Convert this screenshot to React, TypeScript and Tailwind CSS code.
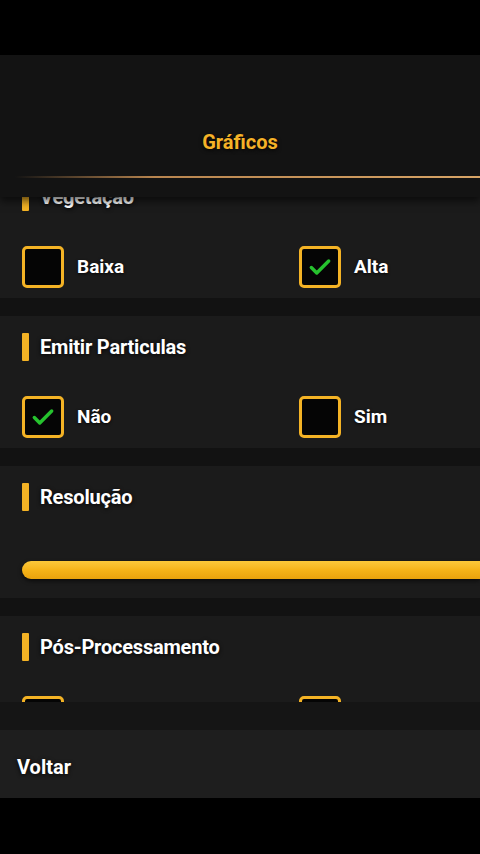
import React from "react";

const font = { fontFamily: "Roboto, 'Liberation Sans', sans-serif" };

const Check = () => (
  <svg viewBox="0 0 24 24" className="h-[26px] w-[26px]" fill="none">
    <path d="M4 12.5l5 5L20 6.5" stroke="#26c22e" strokeWidth="3.2" strokeLinecap="round" strokeLinejoin="round" />
  </svg>
);

const Box = ({ checked, label }: { checked: boolean; label: string }) => (
  <div className="flex items-center gap-[13px]">
    <div className="flex h-[42px] w-[42px] items-center justify-center rounded-[5px] border-[3px] border-[#f4b325] bg-[#050505]">
      {checked && <Check />}
    </div>
    <span className="text-[19px] font-bold text-white [text-shadow:0_1px_3px_rgba(0,0,0,0.8)]">{label}</span>
  </div>
);

const Title = ({ text }: { text: string }) => (
  <div className="flex h-[28px] items-center gap-[11px]">
    <div className="h-[28px] w-[7px] rounded-[1px] bg-[#f4b325]" />
    <span className="text-[20px] font-bold tracking-[-0.2px] text-white [text-shadow:0_1px_4px_rgba(0,0,0,0.9)]">{text}</span>
  </div>
);

const Options = ({ items }: { items: [string, boolean][] }) => (
  <div className="mt-[35px] grid grid-cols-[277px_1fr]">
    {items.map(([label, checked]) => (
      <Box key={label} label={label} checked={checked} />
    ))}
  </div>
);

const Section = ({ children }: { children: React.ReactNode }) => (
  <section className="h-[132px] shrink-0 bg-[#1b1b1b] pl-[22px] pt-[17px]">{children}</section>
);

export default function App() {
  return (
    <div className="flex h-[854px] w-[480px] flex-col bg-black" style={font}>
      <div className="h-[55px] shrink-0 bg-black" />
      <header className="relative z-10 flex h-[142px] shrink-0 flex-col bg-[#131313] shadow-[0_4px_8px_rgba(0,0,0,0.6)]">
        <div className="flex flex-1 items-end justify-center pb-[19px]">
          <span className="text-[20px] font-bold text-[#f5b227] [text-shadow:0_1px_4px_rgba(0,0,0,0.9)]">Gráficos</span>
        </div>
        <div className="mb-[19px] ml-[15px] h-[2px] bg-gradient-to-r from-transparent via-[#b8854f] via-30% to-[#d7a466]" />
      </header>
      <main className="h-[505px] shrink-0 overflow-hidden bg-[#121212]">
        <div className="-mt-[31px] flex flex-col gap-[18px]">
          <Section>
            <Title text="Vegetação" />
            <Options items={[["Baixa", false], ["Alta", true]]} />
          </Section>
          <Section>
            <Title text="Emitir Particulas" />
            <Options items={[["Não", true], ["Sim", false]]} />
          </Section>
          <Section>
            <Title text="Resolução" />
            <div className="mt-[50px] h-[18px] rounded-l-full bg-gradient-to-b from-[#fbc83a] via-[#f5b318] to-[#e9a20c] shadow-[0_2px_4px_rgba(0,0,0,0.6)]" />
          </Section>
          <Section>
            <Title text="Pós-Processamento" />
            <div className="mt-[35px] grid grid-cols-[277px_1fr]">
              <div className="h-[42px] w-[42px] rounded-[5px] border-[3px] border-[#f4b325] bg-[#050505]" />
              <div className="h-[42px] w-[42px] rounded-[5px] border-[3px] border-[#f4b325] bg-[#050505]" />
            </div>
          </Section>
        </div>
      </main>
      <div className="h-[28px] shrink-0 bg-[#151515]" />
      <footer className="flex h-[68px] shrink-0 items-center bg-[#1e1e1e] pl-[17px] pt-[5px]">
        <span className="text-[20px] font-bold text-white [text-shadow:0_1px_4px_rgba(0,0,0,0.9)]">Voltar</span>
      </footer>
      <div className="flex-1 bg-black" />
    </div>
  );
}
